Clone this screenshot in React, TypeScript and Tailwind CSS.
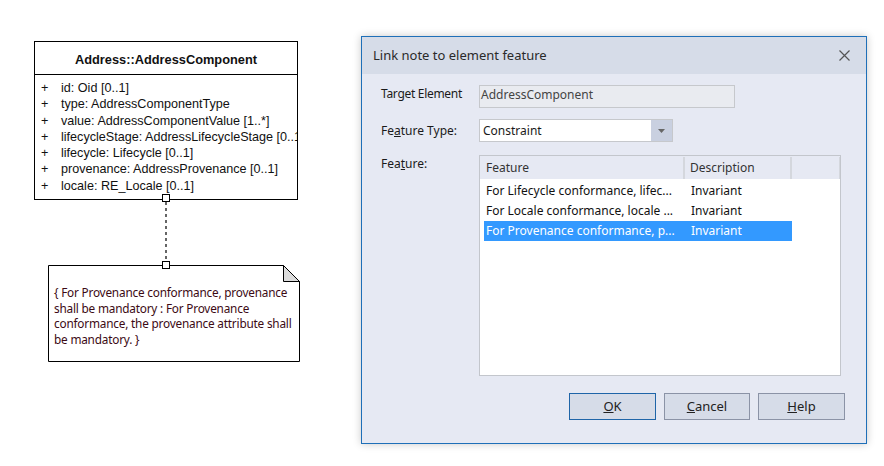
import React from 'react'

const attrs = [
  'id: Oid [0..1]',
  'type: AddressComponentType',
  'value: AddressComponentValue [1..*]',
  'lifecycleStage: AddressLifecycleStage [0..1]',
  'lifecycle: Lifecycle [0..1]',
  'provenance: AddressProvenance [0..1]',
  'locale: RE_Locale [0..1]',
]

const features = [
  { name: 'For Lifecycle conformance, lifec...', desc: 'Invariant' },
  { name: 'For Locale conformance, locale ...', desc: 'Invariant' },
  { name: 'For Provenance conformance, p...', desc: 'Invariant', selected: true },
]

function Handle({ className }: { className: string }) {
  return <div className={`absolute h-[8px] w-[8px] border border-black bg-white ${className}`} />
}

function ClassBox() {
  return (
    <div className="absolute left-[34px] top-[41px] w-[264px] overflow-hidden border border-black bg-white font-['Liberation_Sans',Arial,sans-serif] text-[12.6px] text-[#111]">
      <div className="flex h-[33px] items-center justify-center border-b border-black pt-[4px] text-[12.8px] font-bold">
        Address::AddressComponent
      </div>
      <div className="flex flex-col pb-[5px] pt-[5px] leading-[16.3px]">
        {attrs.map((a) => (
          <div key={a} className="flex">
            <span className="w-[26px] shrink-0 pl-[6px]">+</span>
            <span className="whitespace-nowrap">{a}</span>
          </div>
        ))}
      </div>
    </div>
  )
}

function Note() {
  return (
    <div className="absolute left-[48px] top-[265px] h-[97px] w-[252px]">
      <svg className="absolute inset-0" width="252" height="97" viewBox="0 0 252 97">
        <path d="M0.5 0.5 H235.5 L251.5 16.5 V96.5 H0.5 Z" fill="white" stroke="black" />
        <path d="M235.5 0.5 V16.5 H251.5 Z" fill="#dcdcdc" stroke="black" />
      </svg>
      <div className="relative pl-[6px] pt-[20px] font-['Noto_Sans',sans-serif] text-[11.8px] leading-[15.5px] tracking-[-0.2px] text-[#3c0a14]">
        {'{ For Provenance conformance, provenance shall be mandatory : For Provenance conformance, the provenance attribute shall be mandatory. }'}
      </div>
    </div>
  )
}

function Dialog() {
  return (
    <div className="absolute left-[361px] top-[36px] flex h-[408px] w-[506px] flex-col border border-[#1e6fb8] bg-[#e6e9f3] font-['Noto_Sans',sans-serif] text-[12px] text-[#1a1a1a] shadow-[0_0_8px_rgba(0,0,0,0.22)]">
      <div className="flex h-[37px] items-center justify-between bg-[#d6dce8] pl-[11px] pr-[16px] text-[13px] text-[#2a2a2a]">
        <span>Link note to element feature</span>
        <svg width="11" height="11" viewBox="0 0 11 11">
          <path d="M0.5 0.5 L10.5 10.5 M10.5 0.5 L0.5 10.5" stroke="#555" strokeWidth="1.2" />
        </svg>
      </div>
      <div className="flex flex-1 flex-col pl-[19px] pr-[21px] pt-[11px]">
        <div className="flex h-[23px] items-start">
          <span className="w-[98px] tracking-[-0.3px]">Target Element</span>
          <div className="flex h-[23px] w-[256px] items-start border border-[#c6c8cc] bg-[#e9ebf0] pl-[1px] text-[#444]">
            AddressComponent
          </div>
        </div>
        <div className="mt-[11px] flex h-[23px] items-center">
          <span className="w-[98px]">
            Fe<span className="underline">a</span>ture Type:
          </span>
          <div className="flex h-[23px] w-[194px] items-stretch border border-[#c6c8cc] bg-white">
            <span className="flex flex-1 items-center pl-[3px]">Constraint</span>
            <span className="flex w-[21px] items-center justify-center bg-[#c9d0e0]">
              <svg width="7" height="4" viewBox="0 0 7 4">
                <path d="M0 0 H7 L3.5 4 Z" fill="#666" />
              </svg>
            </span>
          </div>
        </div>
        <div className="mt-[13px] flex">
          <span className="w-[98px]">
            Fea<span className="underline">t</span>ure:
          </span>
          <div className="flex h-[221px] w-[362px] flex-col border border-[#c3c6cc] bg-white">
            <div className="flex h-[23px] bg-[#e6e9f3] pt-[1px]">
              <div className="flex w-[205px] items-center border-r-2 border-[#d4d7dd] pl-[6px] text-[#333]">Feature</div>
              <div className="flex w-[107px] items-center border-r-2 border-[#d4d7dd] pl-[5px] text-[#333]">Description</div>
              <div className="flex-1 border-r border-[#d4d7dd]" />
            </div>
            <div className="flex flex-col pl-[4px] pt-[2px]">
              {features.map((f) => (
                <div
                  key={f.name}
                  className={`flex h-[20px] w-[308px] items-center ${f.selected ? 'bg-[#3399ff] text-white' : 'text-[#111]'}`}
                >
                  <span className="w-[205px] whitespace-nowrap pl-[2px]">{f.name}</span>
                  <span className="pl-[2px]">{f.desc}</span>
                </div>
              ))}
            </div>
          </div>
        </div>
        <div className="mt-[17px] flex justify-end gap-[8px]">
          <button className="h-[27px] w-[87px] border border-[#1f65a8] bg-[#d6dce8] text-[13px] text-[#222]">
            <span className="underline">O</span>K
          </button>
          <button className="h-[27px] w-[86px] border border-[#8b93a6] bg-[#d6dce8] text-[13px] text-[#222]">
            <span className="underline">C</span>ancel
          </button>
          <button className="h-[27px] w-[87px] border border-[#8b93a6] bg-[#d6dce8] text-[13px] text-[#222]">
            <span className="underline">H</span>elp
          </button>
        </div>
      </div>
    </div>
  )
}

export default function App() {
  return (
    <div className="relative h-[466px] w-[884px] overflow-hidden bg-white">
      <ClassBox />
      <svg className="absolute left-[160px] top-[198px]" width="12" height="70" viewBox="0 0 12 70">
        <path d="M6 4 V66" stroke="black" strokeWidth="1.2" strokeDasharray="3 3" />
      </svg>
      <Handle className="left-[162px] top-[194px]" />
      <Note />
      <Handle className="left-[162px] top-[261px]" />
      <Dialog />
    </div>
  )
}
